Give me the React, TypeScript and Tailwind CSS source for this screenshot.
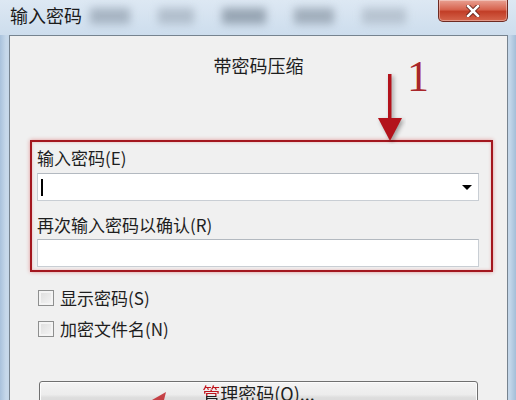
const cjk = { fontFamily: '"Noto Sans CJK SC", "Noto Sans", sans-serif' };

const Checkbox = ({ label }: { label: string }) => (
  <label className="flex items-center gap-[6px] h-[20px]">
    <span className="w-[16px] h-[16px] border border-[#8e8f8f] bg-[linear-gradient(135deg,#dcdcdc,#f6f6f6)] shadow-[inset_0_0_0_2px_#f4f4f4]" />
    <span className="text-[17px] leading-[20px] text-[#1e1e1e]">{label}</span>
  </label>
);

const TextField = ({ dropdown }: { dropdown?: boolean }) => (
  <div className="relative h-[28px] bg-white border border-[#c9ced4] border-t-[#b3b9c0] flex items-center">
    {dropdown && (
      <>
        <span className="ml-[3px] w-[1.5px] h-[17px] bg-black" />
        <span className="ml-auto mr-[6px] w-0 h-0 border-l-[5px] border-r-[5px] border-t-[5px] border-l-transparent border-r-transparent border-t-black" />
      </>
    )}
  </div>
);

export default function App() {
  return (
    <div
      className="relative w-[516px] h-[400px] overflow-hidden flex flex-col bg-[linear-gradient(90deg,#a9c2dc_0px,#c6d8ea_6px,#c9dbed_50%,#c3d6e9_calc(100%-6px),#a4bed8_100%)]"
      style={cjk}
    >
      {/* title bar */}
      <div className="relative shrink-0 h-[35px] flex items-start justify-between bg-[linear-gradient(180deg,#dde8f3,#cddded)]">
        <div className="absolute left-[90px] top-[8px] w-[330px] h-[16px] flex gap-[28px] opacity-60 blur-[4px]">
          <span className="w-[40px] bg-[#8896a5]" />
          <span className="w-[36px] bg-[#9aa7b5]" />
          <span className="w-[44px] bg-[#6f7d8c]" />
          <span className="w-[40px] bg-[#7f8c9a]" />
          <span className="w-[44px] bg-[#a3afbc]" />
        </div>
        <span className="relative ml-[10px] mt-[5px] text-[18px] leading-[20px] text-[#1b1b1b]">输入密码</span>
        <button className="relative mr-[8px] w-[70px] h-[22px] rounded-b-[5px] border border-t-0 border-[#6e2a22] bg-[linear-gradient(180deg,#e9a192_0%,#d7644f_45%,#c23e27_55%,#d5654c_100%)] shadow-[inset_0_0_0_1px_rgba(255,255,255,0.35)] flex items-center justify-center">
          <svg width="14" height="12" viewBox="0 0 14 12">
            <path d="M2 1 L12 11 M12 1 L2 11" stroke="#5a1a12" strokeWidth="4.2" strokeLinecap="square" />
            <path d="M2 1 L12 11 M12 1 L2 11" stroke="#ffffff" strokeWidth="2.6" strokeLinecap="square" />
          </svg>
        </button>
      </div>

      {/* client area */}
      <div className="flex-1 min-h-0 mx-[9px] mr-[8px] border border-b-0 border-[#76838f] bg-[#f0f0f0] flex flex-col">
        <div className="mt-[17px] shrink-0 text-center text-[18px] leading-[24px] text-[#1e1e1e]">带密码压缩</div>

        <div className="mt-[63px] shrink-0 ml-[20px] w-[463px] border-2 border-[#a3171f] shadow-[0_0_4px_rgba(210,40,40,0.45),inset_0_0_3px_rgba(210,40,40,0.3)] pt-[6px] pb-[3px] pl-[5px] pr-[12px] flex flex-col">
          <span className="h-[20px] text-[17px] leading-[20px] text-[#1e1e1e]">输入密码(E)</span>
          <div className="mt-[5px]">
            <TextField dropdown />
          </div>
          <span className="mt-[14px] h-[20px] text-[17px] leading-[20px] text-[#1e1e1e]">再次输入密码以确认(R)</span>
          <div className="mt-[4px]">
            <TextField />
          </div>
        </div>

        <div className="mt-[16px] shrink-0 ml-[28px] flex flex-col gap-[11px]">
          <Checkbox label="显示密码(S)" />
          <Checkbox label="加密文件名(N)" />
        </div>

        <button className="mt-[42px] shrink-0 ml-[29px] w-[439px] h-[30px] rounded-[3px] border border-[#707070] bg-[linear-gradient(180deg,#f4f4f4_0%,#ececec_45%,#dedede_55%,#d2d2d2_100%)] shadow-[inset_0_0_0_1px_#fcfcfc] flex items-start justify-center">
          <span className="text-[18px] leading-[22px] text-[#1e1e1e]">
            <span className="bg-[linear-gradient(180deg,#c0141c_60%,#1e1e1e_60%)] bg-clip-text text-transparent">管</span>
            理密码(O)...
          </span>
        </button>
      </div>

      {/* annotation: number and arrow */}
      <span
        className="absolute left-[407px] top-[52px] text-[44px] leading-[50px] text-[#a8262a]"
        style={{ fontFamily: '"Liberation Serif", serif' }}
      >
        1
      </span>
      <svg className="absolute left-[374px] top-[72px]" width="32" height="72" viewBox="0 0 32 72">
        <g style={{ filter: "drop-shadow(2px 2px 2px rgba(0,0,0,0.35))" }}>
          <rect x="14" y="2" width="3.5" height="46" fill="#b3121b" />
          <path d="M4 46 L28 46 L16 69 Z" fill="#b3121b" />
        </g>
      </svg>
      <svg className="absolute left-[150px] top-[388px]" width="24" height="12" viewBox="0 0 24 12">
        <path d="M2 12 L16 4 L14 12 Z" fill="#c0242a" opacity="0.85" />
      </svg>
    </div>
  );
}
